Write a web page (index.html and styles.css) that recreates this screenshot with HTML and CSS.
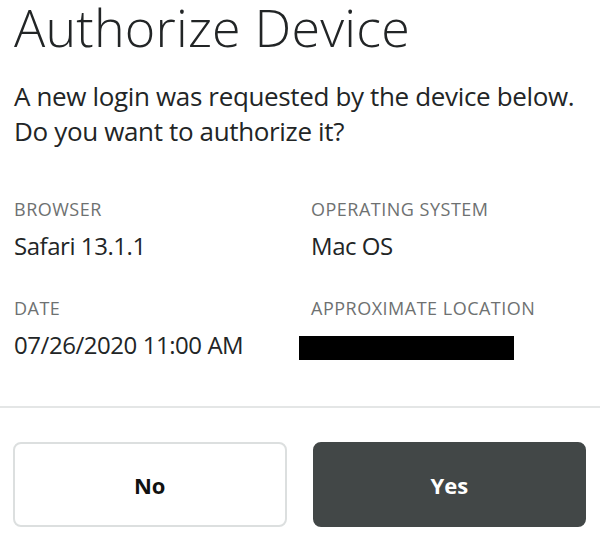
FILE: index.html
```html
<!DOCTYPE html>
<html>
<head>
<meta charset="utf-8">
<link rel="stylesheet" href="styles.css">
</head>
<body>
<main class="page">
  <section class="content">
    <h1 class="title">Authorize Device</h1>
    <p class="lead">A new login was requested by the device below. Do you want to authorize it?</p>
    <dl class="details">
      <div class="item">
        <dt class="label">BROWSER</dt>
        <dd class="value">Safari 13.1.1</dd>
      </div>
      <div class="item">
        <dt class="label">OPERATING SYSTEM</dt>
        <dd class="value">Mac OS</dd>
      </div>
      <div class="item">
        <dt class="label">DATE</dt>
        <dd class="value">07/26/2020 11:00 AM</dd>
      </div>
      <div class="item">
        <dt class="label">APPROXIMATE LOCATION</dt>
        <dd class="value"><span class="redacted"></span></dd>
      </div>
    </dl>
  </section>
  <hr class="divider">
  <div class="actions">
    <button class="btn btn-no">No</button>
    <button class="btn btn-yes">Yes</button>
  </div>
</main>
</body>
</html>
```
FILE: styles.css
```css
* { box-sizing: border-box; }
html, body { margin: 0; padding: 0; background: #fff; }
body {
  font-family: "Open Sans", "Noto Sans", sans-serif;
  color: #222526;
  width: 600px;
  height: 544px;
  overflow: hidden;
}
.content { padding: 0 14px; }
.title {
  margin: 0;
  font-size: 52px;
  font-weight: 300;
  line-height: 54px;
  letter-spacing: 0.2px;
  white-space: nowrap;
}
.lead {
  margin: 25px 0 0;
  font-size: 26px;
  font-weight: 400;
  line-height: 35px;
  letter-spacing: -0.35px;
}
.details {
  margin: 50px 0 0;
  display: grid;
  grid-template-columns: 297px 1fr;
  row-gap: 37px;
}
.item { margin: 0; }
.label {
  margin: 0;
  font-size: 18px;
  line-height: 20px;
  letter-spacing: 0.5px;
  color: #6e7171;
}
.value {
  display: flow-root;
  margin: 12px 0 0;
  font-size: 24px;
  line-height: 30px;
  height: 30px;
  letter-spacing: -0.45px;
}
.redacted {
  display: block;
  width: 215px;
  height: 24px;
  margin: 6px 0 0 -12px;
  background: #000;
}
.divider {
  margin: 46px 0 0;
  border: 0;
  height: 2px;
  background: #e4e6e6;
}
.actions {
  display: flex;
  gap: 26px;
  padding: 34px 14px 0 13px;
}
.btn {
  flex: 1;
  height: 85px;
  border-radius: 8px;
  font-family: "Open Sans", "Noto Sans", sans-serif;
  font-size: 22px;
  font-weight: 700;
  cursor: pointer;
}
.btn-no {
  background: #fff;
  border: 2px solid #dcdfdf;
  color: #111;
}
.btn-yes {
  background: #424747;
  border: 2px solid #424747;
  color: #fff;
}
```
